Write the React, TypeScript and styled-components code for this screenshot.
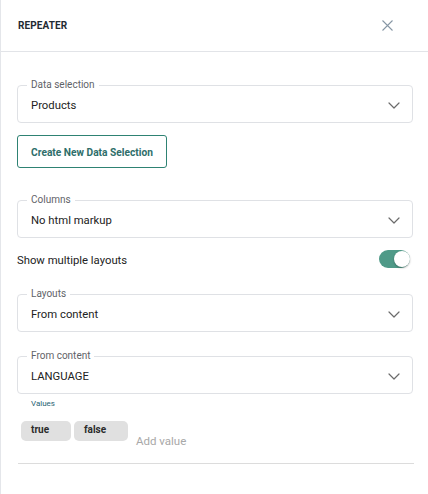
import React from "react";
import styled, { createGlobalStyle } from "styled-components";

const Global = createGlobalStyle`
  html, body { margin: 0; padding: 0; background: #fff; }
  body { font-family: Roboto, "Liberation Sans", Arial, sans-serif; }
  * { box-sizing: border-box; }
`;

const Panel = styled.div`
  width: 428px;
  height: 494px;
  border-left: 1px solid #e4e6ea;
  background: #fff;
  display: flex;
  flex-direction: column;
`;

const Header = styled.div`
  height: 52px;
  border-bottom: 1px solid #e2e4e8;
  display: flex;
  align-items: center;
  justify-content: space-between;
  padding: 0 35px 0 17px;
`;

const Title = styled.h1`
  margin: 0;
  font-size: 10px;
  font-weight: 700;
  color: #1f2a33;
  letter-spacing: 0.1px;
`;

const CloseBtn = styled.button`
  border: 0;
  background: none;
  padding: 0;
  width: 12px;
  height: 12px;
  display: flex;
  align-items: center;
  justify-content: center;
  cursor: pointer;
`;

const Body = styled.div`
  display: flex;
  flex-direction: column;
  padding: 33px 15px 0 16px;
`;

const Field = styled.div<{ $mt?: number }>`
  position: relative;
  height: 38px;
  border: 1px solid #dfe1e5;
  border-radius: 4px;
  display: flex;
  align-items: center;
  justify-content: space-between;
  padding: 2px 12px 0 13px;
  margin-top: ${(p) => p.$mt ?? 0}px;
`;

const Legend = styled.span`
  position: absolute;
  left: 9px;
  top: -7px;
  padding: 0 4px;
  background: #fff;
  font-size: 10px;
  line-height: 12px;
  color: #5f6368;
`;

const Value = styled.span`
  font-size: 11.3px;
  color: #222;
`;

const OutlineButton = styled.button`
  align-self: flex-start;
  margin-top: 12px;
  height: 33px;
  width: 150px;
  border: 1px solid #2e8273;
  border-radius: 3px;
  background: #fff;
  font-family: Roboto, "Liberation Sans", Arial, sans-serif;
  font-size: 10.2px;
  font-weight: 700;
  color: #2e6e6a;
  padding: 1px 0 0;
  cursor: pointer;
`;

const ToggleRow = styled.div`
  display: flex;
  align-items: center;
  justify-content: space-between;
  margin-top: 10px;
  height: 22px;
  padding-right: 3px;
`;

const ToggleLabel = styled.span`
  font-size: 11.3px;
  color: #222;
  padding-top: 2px;
`;

const Switch = styled.div<{ $on: boolean }>`
  position: relative;
  width: 31px;
  height: 18px;
  border-radius: 9px;
  background: ${(p) => (p.$on ? "#4f9a88" : "#ccc")};
`;

const Knob = styled.div<{ $on: boolean }>`
  position: absolute;
  top: 1px;
  left: ${(p) => (p.$on ? "15px" : "1px")};
  width: 16px;
  height: 16px;
  border-radius: 50%;
  background: #fff;
  box-shadow: 0 1px 2px rgba(0, 0, 0, 0.3);
`;

const SmallLabel = styled.div`
  margin-top: 4px;
  padding-left: 14px;
  font-size: 8px;
  color: #2a6574;
  height: 12px;
  line-height: 12px;
`;

const ChipRow = styled.div`
  display: flex;
  align-items: flex-start;
  gap: 3px;
  margin-top: 11px;
  padding-left: 4px;
`;

const Chip = styled.span<{ $w: number }>`
  width: ${(p) => p.$w}px;
  height: 20px;
  border-radius: 5px;
  background: #e0e0e0;
  font-size: 10px;
  font-weight: 700;
  color: #2b2b2b;
  padding: 3px 0 0 10px;
`;

const AddValue = styled.span`
  margin-top: 13px;
  margin-left: 5px;
  font-size: 11.5px;
  color: #a8a8a8;
`;

const Divider = styled.hr`
  margin: 15px 0 0 1px;
  border: 0;
  border-top: 1px solid #dcdcdc;
  width: 396px;
`;

const Chevron = () => (
  <svg width="12" height="7" viewBox="0 0 12 7" fill="none">
    <path d="M1 1l5 5 5-5" stroke="#6b6b6b" strokeWidth="1.2" strokeLinecap="round" strokeLinejoin="round" />
  </svg>
);

const Select = ({ label, value, mt }: { label: string; value: string; mt?: number }) => (
  <Field $mt={mt}>
    <Legend>{label}</Legend>
    <Value>{value}</Value>
    <Chevron />
  </Field>
);

export default function App() {
  return (
    <>
      <Global />
      <Panel>
        <Header>
          <Title>REPEATER</Title>
          <CloseBtn aria-label="close">
            <svg width="11" height="11" viewBox="0 0 11 11">
              <path d="M0.5 0.5l10 10M10.5 0.5l-10 10" stroke="#8797a5" strokeWidth="1.1" />
            </svg>
          </CloseBtn>
        </Header>
        <Body>
          <Select label="Data selection" value="Products" />
          <OutlineButton>Create New Data Selection</OutlineButton>
          <Select label="Columns" value="No html markup" mt={32} />
          <ToggleRow>
            <ToggleLabel>Show multiple layouts</ToggleLabel>
            <Switch $on>
              <Knob $on />
            </Switch>
          </ToggleRow>
          <Select label="Layouts" value="From content" mt={24} />
          <Select label="From content" value="LANGUAGE" mt={24} />
          <SmallLabel>Values</SmallLabel>
          <ChipRow>
            <Chip $w={50}>true</Chip>
            <Chip $w={54}>false</Chip>
            <AddValue>Add value</AddValue>
          </ChipRow>
          <Divider />
        </Body>
      </Panel>
    </>
  );
}
